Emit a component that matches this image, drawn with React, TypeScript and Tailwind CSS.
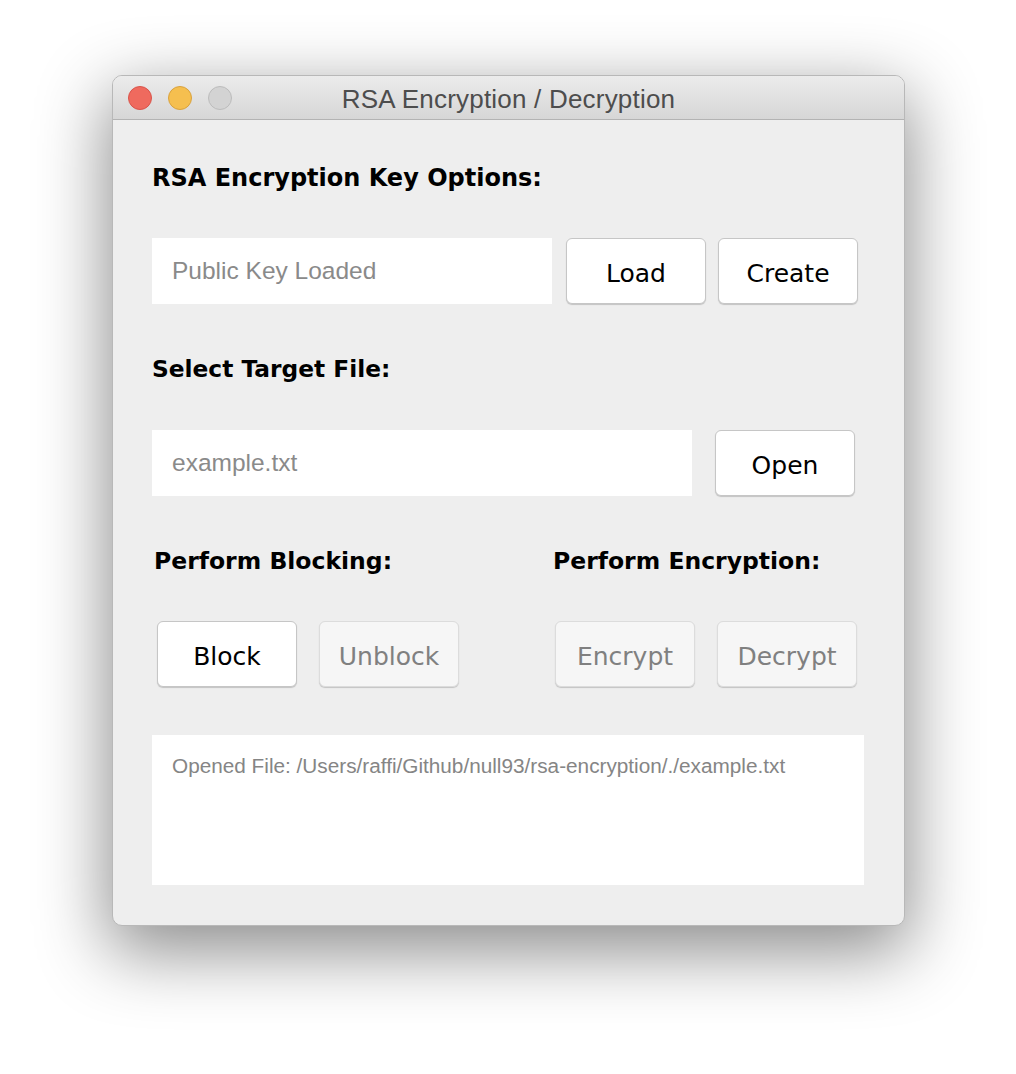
import React from 'react';

function Button({ label, disabled, className = '' }: { label: string; disabled?: boolean; className?: string }) {
  return (
    <button
      disabled={disabled}
      className={
        "flex h-[66px] w-[140px] shrink-0 items-center justify-center rounded-[6px] border pt-[5px] text-[25px] font-['DejaVu_Sans',sans-serif] shadow-[0_1px_1px_rgba(0,0,0,0.18)] " +
        (disabled
          ? 'border-[#dcdcdc] bg-[#f6f6f6] text-[#808080] '
          : 'border-[#c6c6c6] bg-white text-black ') +
        className
      }
    >
      {label}
    </button>
  );
}

function Heading({ children, className = '' }: { children: React.ReactNode; className?: string }) {
  return (
    <div className={"h-[36px] leading-[36px] font-bold text-black font-['DejaVu_Sans',sans-serif] " + className}>
      {children}
    </div>
  );
}

function Field({ value, className = '' }: { value: string; className?: string }) {
  return (
    <div className={"flex h-[66px] items-center bg-white pl-[20px] text-[24.5px] text-[#8a8a8a] font-['Liberation_Sans',Arial,sans-serif] " + className}>
      {value}
    </div>
  );
}

export default function App() {
  return (
    <div className="min-h-[1074px] w-[1016px] bg-white pl-[112px] pt-[75px]">
      <div className="w-[793px] overflow-hidden rounded-[10px] border border-[#b8b8b8] bg-[#eeeeee] shadow-[0_22px_70px_4px_rgba(0,0,0,0.45)]">
        {/* title bar */}
        <div className="relative flex h-[44px] items-center border-b border-[#b3b3b3] bg-gradient-to-b from-[#ececec] to-[#d6d6d6]">
          <div className="flex items-center gap-[16px] pl-[15px] pt-[1px]">
            <span className="h-[24px] w-[24px] rounded-full border border-[#d9544b] bg-[#ef6a5e]" />
            <span className="h-[24px] w-[24px] rounded-full border border-[#d9a23e] bg-[#f5bf4f]" />
            <span className="h-[24px] w-[24px] rounded-full border border-[#bcbcbc] bg-[#d3d3d3]" />
          </div>
          <div className="absolute inset-0 flex items-center justify-center pt-[3px] text-[26px] tracking-[0.2px] text-[#4d4d4d] font-['Liberation_Sans',Arial,sans-serif]">
            RSA Encryption / Decryption
          </div>
        </div>

        {/* content */}
        <div className="pb-[40px] pl-[39px] pr-[40px] pt-[40px]">
          <Heading className="text-[24px]">RSA Encryption Key Options:</Heading>
          <div className="mt-[42px] flex items-center">
            <Field value="Public Key Loaded" className="w-[400px]" />
            <Button label="Load" className="ml-[14px] w-[139px]" />
            <Button label="Create" className="ml-[12px]" />
          </div>

          <Heading className="mt-[47px] text-[23.3px]">Select Target File:</Heading>
          <div className="mt-[43px] flex items-center">
            <Field value="example.txt" className="w-[540px]" />
            <Button label="Open" className="ml-[23px]" />
          </div>

          <div className="mt-[47px] flex text-[23.5px]">
            <Heading className="w-[401px] pl-[2px]">Perform Blocking:</Heading>
            <Heading>Perform Encryption:</Heading>
          </div>
          <div className="mt-[42px] flex items-center">
            <Button label="Block" className="ml-[5px]" />
            <Button label="Unblock" disabled className="ml-[22px]" />
            <Button label="Encrypt" disabled className="ml-[96px]" />
            <Button label="Decrypt" disabled className="ml-[22px]" />
          </div>

          <div className="mt-[48px] h-[150px] w-[712px] bg-white px-[20px] pt-[15px] text-[20.75px] text-[#858585] font-['Liberation_Sans',Arial,sans-serif]">
            Opened File: /Users/raffi/Github/null93/rsa-encryption/./example.txt
          </div>
        </div>
      </div>
    </div>
  );
}
